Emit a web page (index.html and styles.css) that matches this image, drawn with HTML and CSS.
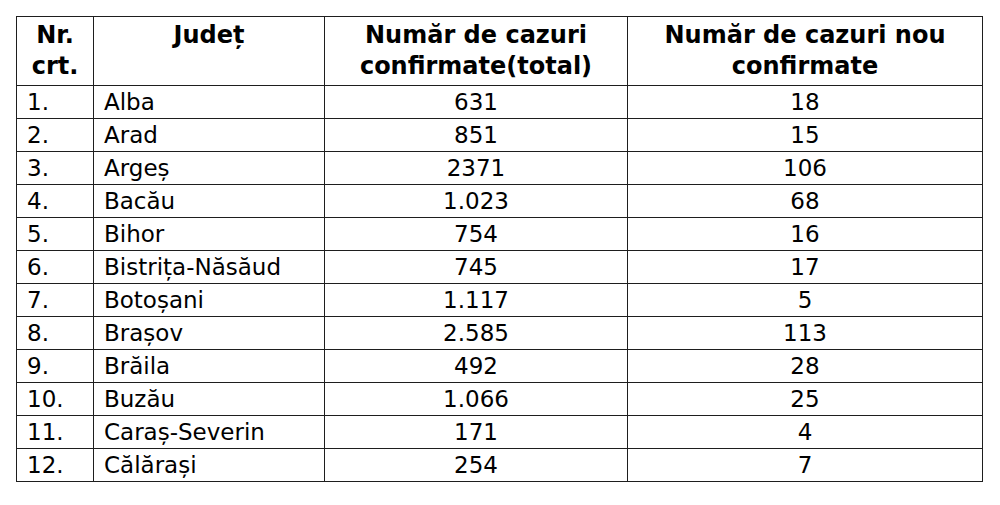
FILE: index.html
```html
<!DOCTYPE html>
<html lang="ro">
<head>
<meta charset="utf-8">
<link rel="stylesheet" href="styles.css">
</head>
<body>
<table class="tbl">
  <colgroup>
    <col class="c1"><col class="c2"><col class="c3"><col class="c4">
  </colgroup>
  <thead>
    <tr>
      <th>Nr.<br>crt.</th>
      <th>Județ</th>
      <th>Număr de cazuri<br>confirmate(total)</th>
      <th>Număr de cazuri nou<br>confirmate</th>
    </tr>
  </thead>
  <tbody>
    <tr><td>1.</td><td>Alba</td><td class="n">631</td><td class="n">18</td></tr>
    <tr><td>2.</td><td>Arad</td><td class="n">851</td><td class="n">15</td></tr>
    <tr><td>3.</td><td>Argeș</td><td class="n">2371</td><td class="n">106</td></tr>
    <tr><td>4.</td><td>Bacău</td><td class="n">1.023</td><td class="n">68</td></tr>
    <tr><td>5.</td><td>Bihor</td><td class="n">754</td><td class="n">16</td></tr>
    <tr><td>6.</td><td>Bistrița-Năsăud</td><td class="n">745</td><td class="n">17</td></tr>
    <tr><td>7.</td><td>Botoșani</td><td class="n">1.117</td><td class="n">5</td></tr>
    <tr><td>8.</td><td>Brașov</td><td class="n">2.585</td><td class="n">113</td></tr>
    <tr><td>9.</td><td>Brăila</td><td class="n">492</td><td class="n">28</td></tr>
    <tr><td>10.</td><td>Buzău</td><td class="n">1.066</td><td class="n">25</td></tr>
    <tr><td>11.</td><td>Caraș-Severin</td><td class="n">171</td><td class="n">4</td></tr>
    <tr><td>12.</td><td>Călărași</td><td class="n">254</td><td class="n">7</td></tr>
  </tbody>
</table>
</body>
</html>
```
FILE: styles.css
```css
html, body {
  margin: 0;
  padding: 0;
  background: #fff;
}
body {
  padding: 16px 0 0 16px;
  font-family: "DejaVu Sans", sans-serif;
  color: #000;
}
.tbl {
  border-collapse: collapse;
  table-layout: fixed;
  width: 966px;
}
.c1 { width: 77px; }
.c2 { width: 231px; }
.c3 { width: 303px; }
.c4 { width: 355px; }
.tbl th, .tbl td {
  border: 1px solid #1e1e1e;
  padding: 0 0 0 10px;
}
.tbl th {
  height: 65px;
  font-size: 24px;
  font-weight: bold;
  line-height: 31px;
  text-align: center;
  vertical-align: top;
  padding: 3px 0 0 0;
}
.tbl td {
  height: 32px;
  font-size: 23px;
  line-height: 32px;
  vertical-align: bottom;
  text-align: left;
}
.tbl td.n {
  text-align: center;
  padding: 0;
}
```
